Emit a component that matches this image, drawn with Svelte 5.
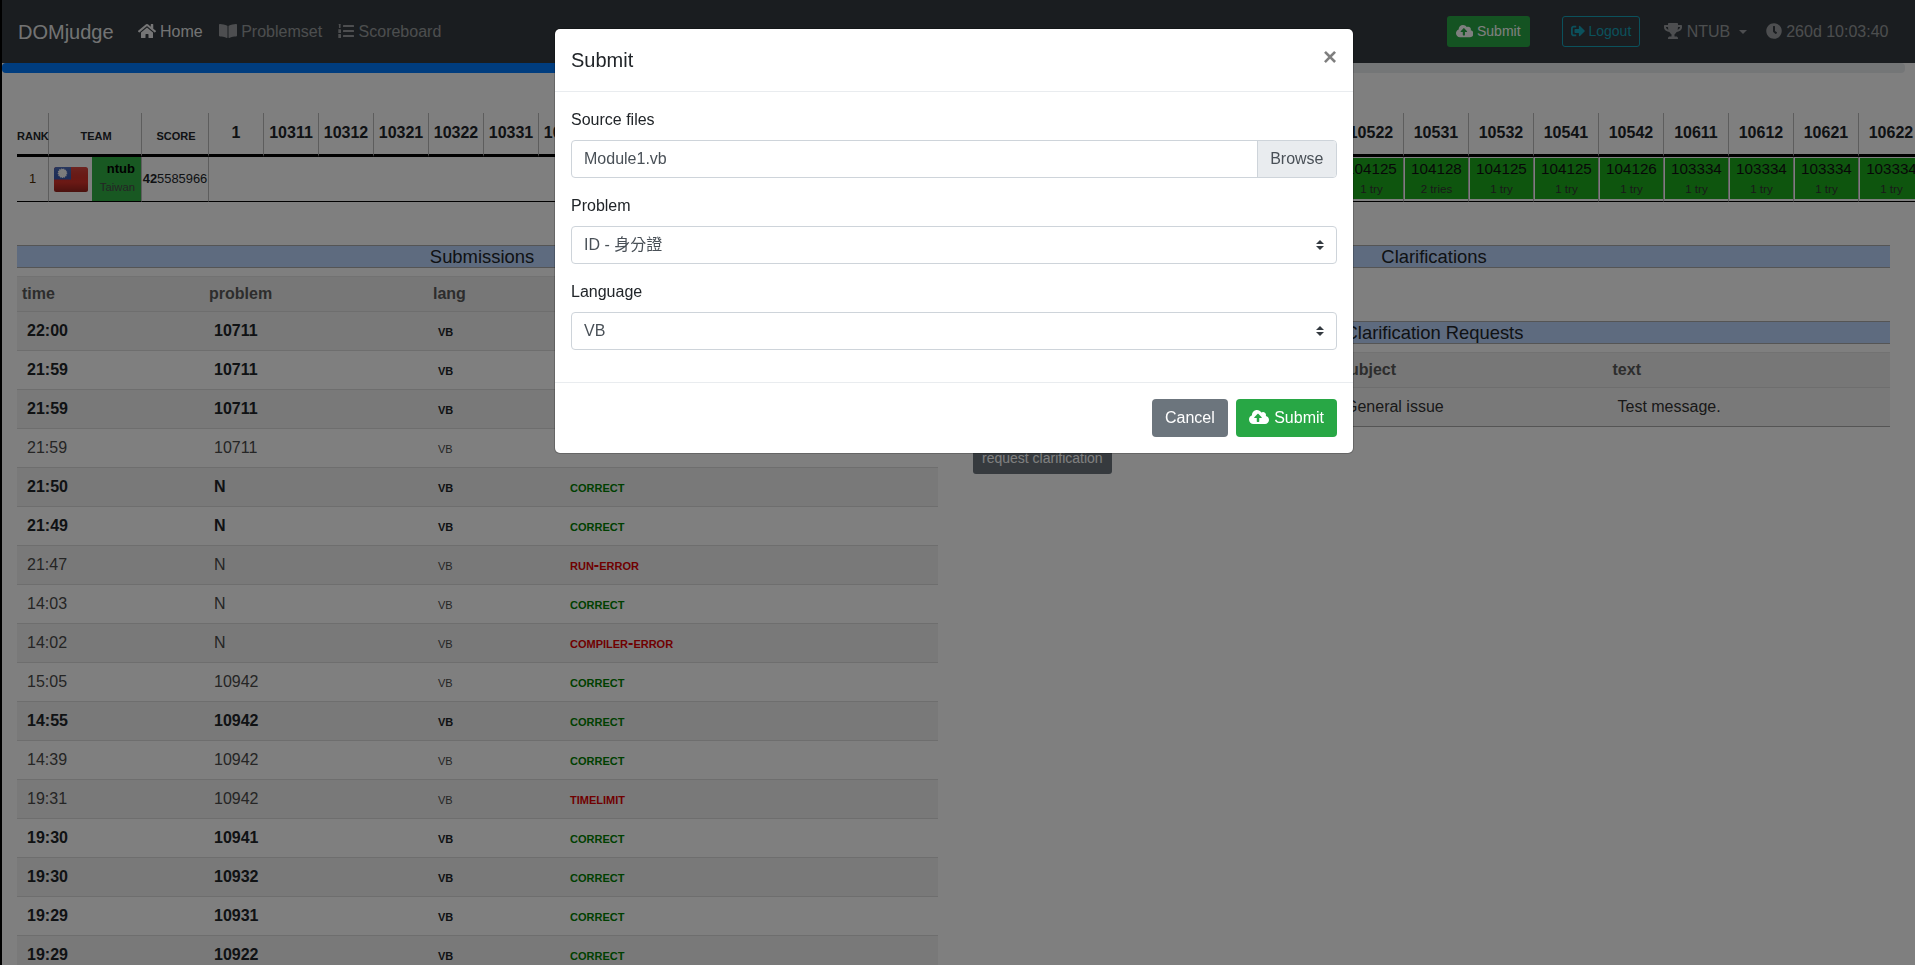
<script lang="ts">
	const home =
		'M280.37 148.26L96 300.11V464a16 16 0 0 0 16 16l112.06-.29a16 16 0 0 0 15.92-16V368a16 16 0 0 1 16-16h64a16 16 0 0 1 16 16v95.64a16 16 0 0 0 16 16.05L464 480a16 16 0 0 0 16-16V300L295.67 148.26a12.19 12.19 0 0 0-15.3 0zM571.6 251.47L488 182.56V44.05a12 12 0 0 0-12-12h-56a12 12 0 0 0-12 12v72.61L318.47 43a48 48 0 0 0-61 0L4.34 251.47a12 12 0 0 0-1.6 16.9l25.5 31A12 12 0 0 0 45.15 301l235.22-193.74a12.19 12.19 0 0 1 15.3 0L530.9 301a12 12 0 0 0 16.9-1.6l25.5-31a12 12 0 0 0-1.7-16.93z';
	const book =
		'M542.22 32.05c-54.8 3.11-163.72 14.43-230.96 55.59-4.64 2.84-7.27 7.89-7.27 13.17v363.87c0 11.55 12.63 18.85 23.28 13.49 69.18-34.82 169.23-44.32 218.7-46.92 16.89-.89 30.02-14.43 30.02-30.66V62.75c.01-17.71-15.35-31.74-33.77-30.7zM264.73 87.64C197.5 46.48 88.58 35.17 33.78 32.05 15.36 31.01 0 45.04 0 62.75V400.6c0 16.24 13.13 29.78 30.02 30.66 49.49 2.6 149.59 12.11 218.77 46.95 10.62 5.35 23.21-1.94 23.21-13.46V100.63c0-5.29-2.62-10.14-7.27-12.99z';
	const cloud =
		'M537.6 226.6c4.1-10.7 6.4-22.4 6.4-34.6 0-53-43-96-96-96-19.7 0-38.1 6-53.3 16.2C367 64.2 315.3 32 256 32c-88.4 0-160 71.6-160 160 0 2.7.1 5.4.2 8.1C40.2 219.8 0 273.2 0 336c0 79.5 64.5 144 144 144h368c70.7 0 128-57.3 128-128 0-61.9-44-113.6-102.4-125.4zM393.4 288H328v112c0 8.8-7.2 16-16 16h-48c-8.8 0-16-7.2-16-16V288h-65.4c-14.3 0-21.4-17.2-11.3-27.3l105.4-105.4c6.2-6.2 16.4-6.2 22.6 0l105.4 105.4c10.1 10.1 2.9 27.3-11.3 27.3z';
	const signOut =
		'M497 273L329 441c-15 15-41 4.5-41-17v-96H152c-13.3 0-24-10.7-24-24v-96c0-13.3 10.7-24 24-24h136V88c0-21.4 25.9-32 41-17l168 168c9.3 9.4 9.3 24.6 0 34zM192 436v-40c0-6.6-5.4-12-12-12H96c-17.7 0-32-14.3-32-32V160c0-17.7 14.3-32 32-32h84c6.6 0 12-5.4 12-12V76c0-6.6-5.4-12-12-12H96c-53 0-96 43-96 96v192c0 53 43 96 96 96h84c6.6 0 12-5.4 12-12z';
	const trophy =
		'M552 64H448V24c0-13.3-10.7-24-24-24H152c-13.3 0-24 10.7-24 24v40H24C10.7 64 0 74.7 0 88v56c0 35.7 22.5 72.4 61.9 100.7 31.5 22.7 69.8 37.1 110 41.7C203.3 338.5 240 360 240 360v72h-48c-35.3 0-64 20.7-64 56v12c0 6.6 5.4 12 12 12h296c6.6 0 12-5.4 12-12v-12c0-35.3-28.7-56-64-56h-48v-72s36.7-21.5 68.1-73.6c40.3-4.6 78.6-19 110-41.7 39.3-28.3 61.9-65 61.9-100.7V88c0-13.3-10.7-24-24-24zM99.3 192.8C74.9 175.2 64 155.6 64 144v-16h64.2c1 32.6 5.8 61.2 12.8 86.2-15.1-5.2-29.2-12.4-41.7-21.4zM512 144c0 16.1-17.7 36.1-35.3 48.8-12.5 9-26.7 16.2-41.8 21.4 7-25 11.8-53.6 12.8-86.2H512v16z';
	const clock =
		'M256,8C119,8,8,119,8,256S119,504,256,504,504,393,504,256,393,8,256,8Zm92.49,313h0l-20,25a16,16,0,0,1-22.49,2.5h0l-67-49.72a40,40,0,0,1-15-31.23V112a16,16,0,0,1,16-16h32a16,16,0,0,1,16,16V256l58,42.5A16,16,0,0,1,348.49,321Z';

	// scoreboard columns: the first ones are unsolved, the middle ones sit under the modal
	const problems = [
		{ id: '1', w: 55 },
		{ id: '10311', w: 55 },
		{ id: '10312', w: 55 },
		{ id: '10321', w: 55 },
		{ id: '10322', w: 55 },
		{ id: '10331', w: 55 },
		{ id: '10332', w: 55 },
		...['10341', '10342', '10411', '10412', '10421', '10422', '10431', '10432', '10441', '10442', '10511', '10521'].map(
			(id) => ({ id, w: 745 / 12, time: '104125', tries: '1 try' })
		),
		{ id: '10522', w: 65, time: '104125', tries: '1 try' },
		{ id: '10531', w: 65, time: '104128', tries: '2 tries' },
		{ id: '10532', w: 65, time: '104125', tries: '1 try' },
		{ id: '10541', w: 65, time: '104125', tries: '1 try' },
		{ id: '10542', w: 65, time: '104126', tries: '1 try' },
		{ id: '10611', w: 65, time: '103334', tries: '1 try' },
		{ id: '10612', w: 65, time: '103334', tries: '1 try' },
		{ id: '10621', w: 65, time: '103334', tries: '1 try' },
		{ id: '10622', w: 65, time: '103334', tries: '1 try' }
	];

	const submissions = [
		{ time: '22:00', problem: '10711', verdict: 'correct', unread: true },
		{ time: '21:59', problem: '10711', verdict: 'correct', unread: true },
		{ time: '21:59', problem: '10711', verdict: 'correct', unread: true },
		{ time: '21:59', problem: '10711', verdict: 'correct', unread: false },
		{ time: '21:50', problem: 'N', verdict: 'correct', unread: true },
		{ time: '21:49', problem: 'N', verdict: 'correct', unread: true },
		{ time: '21:47', problem: 'N', verdict: 'run-error', unread: false },
		{ time: '14:03', problem: 'N', verdict: 'correct', unread: false },
		{ time: '14:02', problem: 'N', verdict: 'compiler-error', unread: false },
		{ time: '15:05', problem: '10942', verdict: 'correct', unread: false },
		{ time: '14:55', problem: '10942', verdict: 'correct', unread: true },
		{ time: '14:39', problem: '10942', verdict: 'correct', unread: false },
		{ time: '19:31', problem: '10942', verdict: 'timelimit', unread: false },
		{ time: '19:30', problem: '10941', verdict: 'correct', unread: true },
		{ time: '19:30', problem: '10932', verdict: 'correct', unread: true },
		{ time: '19:29', problem: '10931', verdict: 'correct', unread: true },
		{ time: '19:29', problem: '10922', verdict: 'correct', unread: true }
	];
</script>

<div class="page">
	<div class="content">
		<nav class="navbar">
			<span class="brand">DOMjudge</span>
			<a class="nav-link active"><svg class="fa wide" viewBox="0 0 576 512"><path d={home} /></svg> Home</a>
			<a class="nav-link"><svg class="fa wide" viewBox="0 0 576 512"><path d={book} /></svg> Problemset</a>
			<a class="nav-link"
				><svg class="fa" viewBox="0 0 512 512">
					<rect x="160" y="64" width="352" height="64" rx="16" />
					<rect x="160" y="224" width="352" height="64" rx="16" />
					<rect x="160" y="384" width="352" height="64" rx="16" />
					<rect x="30" y="32" width="52" height="130" rx="8" />
					<rect x="10" y="200" width="86" height="116" rx="8" />
					<rect x="10" y="352" width="86" height="128" rx="8" />
				</svg> Scoreboard</a
			>
			<div class="nav-right">
				<span class="btn-sm success"><svg class="fa cloud" viewBox="0 0 640 512"><path d={cloud} /></svg> Submit</span>
				<span class="btn-sm outline"><svg class="fa small" viewBox="0 0 512 512"><path d={signOut} /></svg> Logout</span>
				<span class="team-menu"><svg class="fa wide" viewBox="0 0 576 512"><path d={trophy} /></svg> NTUB <i class="caret"></i></span>
				<span class="contest-time"><svg class="fa" viewBox="0 0 512 512"><path d={clock} /></svg> 260d 10:03:40</span>
			</div>
		</nav>

		<div class="progress"><div class="progress-bar"></div></div>

		<main class="main">
			<table class="scoreboard">
				<colgroup>
					<col class="col-rank" />
					<col class="col-team" />
					<col class="col-score" />
					{#each problems as p}
						<col style="width: {p.w}px" />
					{/each}
				</colgroup>
				<thead>
					<tr>
						<th class="caps">rank</th>
						<th class="caps shifted">team</th>
						<th class="caps shifted">score</th>
						{#each problems as p}
							<th class="prob">{p.id}</th>
						{/each}
					</tr>
				</thead>
				<tbody>
					<tr>
						<td class="rank">1</td>
						<td class="team">
							<div class="team-inner">
								<svg class="flag" viewBox="0 0 34 25">
									<defs>
										<linearGradient id="gloss" x1="0" y1="0" x2="0" y2="1">
											<stop offset="0" stop-color="#fff" stop-opacity="0.12" />
											<stop offset="0.6" stop-color="#000" stop-opacity="0" />
											<stop offset="1" stop-color="#000" stop-opacity="0.3" />
										</linearGradient>
									</defs>
									<rect width="34" height="25" rx="2.5" fill="#d8322a" />
									<path d="M2.5 0H17V12.5H0V2.5A2.5 2.5 0 0 1 2.5 0Z" fill="#3a5cb4" />
									<circle cx="8.5" cy="6.2" r="4.2" fill="#fff" stroke="#fff" stroke-dasharray="1 1" stroke-width="1.2" />
									<rect width="34" height="25" rx="2.5" fill="url(#gloss)" />
								</svg>
								<div class="team-name">
									<strong>ntub</strong>
									<span>Taiwan</span>
								</div>
							</div>
						</td>
						<td class="score"><b>42</b>5585966</td>
						{#each problems as p, i}
							<td class="result" class:open={!p.time && i > 0}>
								{#if p.time}
									<div class="solved">
										<span class="solve-time">{p.time}</span>
										<span class="tries">{p.tries}</span>
									</div>
								{/if}
							</td>
						{/each}
					</tr>
				</tbody>
			</table>

			<div class="columns">
				<section class="left">
					<h3 class="band">Submissions</h3>
					<table class="list submissions">
						<colgroup>
							<col class="c-time" />
							<col class="c-problem" />
							<col class="c-lang" />
							<col />
						</colgroup>
						<thead>
							<tr>
								<th>time</th>
								<th>problem</th>
								<th>lang</th>
								<th>verdict</th>
							</tr>
						</thead>
						<tbody>
							{#each submissions as s}
								<tr class:unread={s.unread}>
									<td>{s.time}</td>
									<td>{s.problem}</td>
									<td class="lang">vb</td>
									<td class="verdict" class:ok={s.verdict === 'correct'}>{s.verdict}</td>
								</tr>
							{/each}
						</tbody>
					</table>
				</section>

				<section class="right">
					<h3 class="band">Clarifications</h3>
					<h3 class="band second">Clarification Requests</h3>
					<table class="list requests">
						<colgroup>
							<col class="c-req-time" />
							<col class="c-req-time" />
							<col class="c-req-to" />
							<col class="c-subject" />
							<col />
						</colgroup>
						<thead>
							<tr>
								<th>time</th>
								<th>from</th>
								<th>to</th>
								<th>subject</th>
								<th>text</th>
							</tr>
						</thead>
						<tbody>
							<tr>
								<td>21:03</td>
								<td>ntub</td>
								<td>Jury</td>
								<td>General issue</td>
								<td>Test message.</td>
							</tr>
						</tbody>
					</table>
					<span class="btn-sm secondary request">request clarification</span>
				</section>
			</div>
		</main>
	</div>

	<div class="backdrop"></div>

	<div class="modal">
		<header class="modal-header">
			<h5>Submit</h5>
			<span class="close">×</span>
		</header>
		<div class="modal-body">
			<div class="group">
				<label>Source files</label>
				<div class="control file">
					<span class="file-name">Module1.vb</span>
					<span class="browse">Browse</span>
				</div>
			</div>
			<div class="group">
				<label>Problem</label>
				<div class="control select">
					<span>ID - 身分證</span>
					<svg class="arrows" viewBox="0 0 4 5"><path d="M2 0L0 2h4zm0 5L0 3h4z" /></svg>
				</div>
			</div>
			<div class="group">
				<label>Language</label>
				<div class="control select">
					<span>VB</span>
					<svg class="arrows" viewBox="0 0 4 5"><path d="M2 0L0 2h4zm0 5L0 3h4z" /></svg>
				</div>
			</div>
		</div>
		<footer class="modal-footer">
			<span class="btn secondary">Cancel</span>
			<span class="btn success"><svg class="fa cloud-lg" viewBox="0 0 640 512"><path d={cloud} /></svg> Submit</span>
		</footer>
	</div>
</div>

<style>
	:global(body) {
		margin: 0;
		background: #000;
	}

	.page {
		height: 965px;
		width: 1915px;
		overflow: hidden;
		padding-left: 2px;
		box-sizing: border-box;
		font-family: 'Liberation Sans', Arial, 'Noto Sans CJK TC', sans-serif;
		font-size: 16px;
		line-height: 1.5;
		color: #212529;
	}

	.content {
		background: #fff;
		height: 100%;
	}

	.fa {
		width: 16px;
		height: 16px;
		fill: currentColor;
		vertical-align: -2px;
	}

	.fa.wide {
		width: 18px;
	}

	.fa.small {
		width: 14px;
		height: 14px;
	}

	.fa.cloud {
		width: 17.5px;
		height: 14px;
	}

	.fa.cloud-lg {
		width: 20px;
		margin-right: 1px;
	}

	/* navbar */
	.navbar {
		display: flex;
		align-items: center;
		height: 63px;
		padding: 0 26.5px 0 16px;
		background: #343a40;
		box-sizing: border-box;
	}

	.brand {
		font-size: 20px;
		color: rgba(255, 255, 255, 0.9);
		margin-right: 16px;
	}

	.nav-link {
		padding: 0 8px;
		color: rgba(255, 255, 255, 0.5);
		white-space: nowrap;
	}

	.nav-link.active {
		color: rgba(255, 255, 255, 0.9);
	}

	.nav-right {
		margin-left: auto;
		display: flex;
		align-items: center;
		color: rgba(255, 255, 255, 0.5);
	}

	.btn-sm {
		display: inline-block;
		padding: 4px 8px;
		font-size: 14px;
		line-height: 21px;
		border: 1px solid transparent;
		border-radius: 3px;
		white-space: nowrap;
	}

	.btn-sm.success {
		background: #28a745;
		color: #fff;
		margin-right: 32px;
	}

	.btn-sm.outline {
		border-color: #17a2b8;
		color: #17a2b8;
		margin-right: 24px;
	}

	.btn-sm.secondary {
		background: #6c757d;
		color: #fff;
	}

	.team-menu {
		margin-right: 19px;
		white-space: nowrap;
	}

	.caret {
		display: inline-block;
		margin-left: 4px;
		vertical-align: 3px;
		border-top: 4.8px solid;
		border-left: 4.8px solid transparent;
		border-right: 4.8px solid transparent;
	}

	.contest-time {
		white-space: nowrap;
	}

	.progress {
		height: 10px;
		width: 1903px;
		background: #e9ecef;
		border-radius: 4px;
		overflow: hidden;
	}

	.progress-bar {
		height: 100%;
		width: 50%;
		background: #007bff;
	}

	/* scoreboard */
	.main {
		padding: 40px 0 0 15px;
	}

	.scoreboard {
		table-layout: fixed;
		width: 1906px;
		border-collapse: separate;
		border-spacing: 0;
	}

	.col-rank {
		width: 31px;
	}

	.col-team {
		width: 93px;
	}

	.col-score {
		width: 67px;
	}

	.scoreboard th {
		height: 41px;
		padding: 0;
		text-align: center;
		border-left: 1px solid #bbb;
		border-bottom: 3px solid #000;
		box-sizing: content-box;
	}

	.scoreboard th:first-child {
		border-left: 0;
	}

	.scoreboard th.caps {
		font-size: 15.5px;
		font-weight: bold;
		font-variant: small-caps;
		padding-top: 2px;
		height: 39px;
	}

	.scoreboard th.caps.shifted {
		padding-left: 2px;
	}

	.scoreboard th.prob {
		font-size: 16px;
		padding-bottom: 2px;
		height: 39px;
	}

	.scoreboard td {
		height: 44px;
		padding: 0;
		border-left: 1px solid #bbb;
		border-bottom: 1px solid #000;
		vertical-align: middle;
	}

	.scoreboard td:first-child {
		border-left: 0;
	}

	.rank {
		text-align: center;
		font-size: 13px;
		color: #4d2a00;
	}

	.team-inner {
		display: flex;
		height: 44px;
		align-items: center;
	}

	.flag {
		width: 34px;
		height: 25px;
		margin: 0 4px 0 5px;
		flex: none;
	}

	.team-name {
		flex: 1;
		height: 100%;
		background: #30b045;
		text-align: right;
		padding: 3px 6px 0 0;
		box-sizing: border-box;
		display: flex;
		flex-direction: column;
		line-height: 18px;
	}

	.team-name strong {
		font-size: 13px;
		color: #000;
	}

	.team-name span {
		font-size: 11.3px;
		color: #4a4a4a;
	}

	.score {
		font-size: 12.9px;
		text-align: center;
		white-space: nowrap;
		overflow: hidden;
	}

	.scoreboard td.result {
		padding: 1px 0 2px 1px;
		height: 41px;
	}

	.scoreboard td.result.open {
		border-left: 0;
	}

	.solved {
		height: 41px;
		background: #1daa1d;
		text-align: center;
		overflow: hidden;
		display: flex;
		flex-direction: column;
		align-items: center;
		white-space: nowrap;
	}

	.solve-time {
		font-size: 15.2px;
		line-height: 22px;
		color: #111;
	}

	.tries {
		font-size: 11.6px;
		line-height: 18px;
		color: #333;
	}

	/* lists */
	.columns {
		display: flex;
		gap: 26px;
		margin-top: 43px;
	}

	.left {
		width: 930px;
		flex: none;
	}

	.right {
		width: 917px;
		flex: none;
	}

	.band {
		margin: 0;
		font-size: 18.4px;
		font-weight: normal;
		line-height: 21px;
		text-align: center;
		background: #bcd6ff;
		border-top: 1px solid #aaa;
		border-bottom: 1px solid #aaa;
	}

	.right .band,
	.right .list {
		margin-left: 5px;
	}

	.right .band {
		width: 912px;
	}

	.band.second {
		margin-top: 53px;
	}

	.list {
		table-layout: fixed;
		border-collapse: separate;
		border-spacing: 0;
		margin-top: 8px;
	}

	.submissions {
		width: 921px;
	}

	.requests {
		width: 912px;
	}

	.c-time {
		width: 187px;
	}

	.c-problem {
		width: 224px;
	}

	.c-lang {
		width: 132px;
	}

	.c-req-time {
		width: 120px;
	}

	.c-req-to {
		width: 117px;
	}

	.c-subject {
		width: 272.5px;
	}

	.list th {
		padding: 0 0 0 5px;
		text-align: left;
		font-weight: bold;
		color: #5a5a5a;
		background: #eee;
		border-top: 1px solid #e4e4e4;
		box-sizing: border-box;
		height: 35px;
	}

	.list td {
		height: 39px;
		padding: 0 0 0 10px;
		box-sizing: border-box;
		border-top: 1px solid #ddd;
		color: #4a4a4a;
	}

	.list tbody tr:nth-child(odd) td {
		background: #f2f2f2;
	}

	.list tr.unread td {
		font-weight: bold;
		color: #212529;
	}

	.requests tbody tr:last-child td {
		border-bottom: 1px solid #aaa;
		height: 40px;
		color: #333;
	}

	.list td.lang,
	.list td.verdict {
		font-variant: small-caps;
	}

	.list td.verdict,
	.list tr.unread td.verdict {
		font-weight: bold;
		color: #e00000;
	}

	.list td.verdict.ok,
	.list tr.unread td.verdict.ok {
		color: #008000;
	}

	.request {
		margin-top: 16px;
	}

	/* modal */
	.backdrop {
		position: fixed;
		inset: 0;
		background: rgba(0, 0, 0, 0.5);
	}

	.modal {
		position: fixed;
		top: 29px;
		left: 555px;
		width: 798px;
		background: #fff;
		border-radius: 5px;
		box-shadow: 0 0 0 1px rgba(0, 0, 0, 0.2);
	}

	.modal-header {
		display: flex;
		justify-content: space-between;
		padding: 16px;
		border-bottom: 1px solid #e9ecef;
	}

	.modal-header h5 {
		margin: 0;
		font-size: 20px;
		font-weight: normal;
		line-height: 30px;
	}

	.close {
		font-size: 24px;
		font-weight: bold;
		line-height: 24px;
		color: #000;
		opacity: 0.5;
	}

	.modal-body {
		padding: 16px;
	}

	.group {
		margin-bottom: 16px;
	}

	.group label {
		display: block;
		margin-bottom: 8px;
	}

	.control {
		display: flex;
		align-items: center;
		justify-content: space-between;
		height: 38px;
		box-sizing: border-box;
		border: 1px solid #ced4da;
		border-radius: 4px;
		color: #495057;
		overflow: hidden;
	}

	.file-name {
		padding-left: 12px;
	}

	.browse {
		padding: 0 12.5px;
		align-self: stretch;
		display: flex;
		align-items: center;
		background: #e9ecef;
		border-left: 1px solid #ced4da;
	}

	.select {
		padding: 0 12px;
	}

	.arrows {
		width: 8px;
		height: 10px;
		fill: #343a40;
	}

	.modal-footer {
		display: flex;
		justify-content: flex-end;
		gap: 8px;
		padding: 16px;
		border-top: 1px solid #e9ecef;
	}

	.btn {
		display: inline-block;
		padding: 6px 12px;
		line-height: 24px;
		border: 1px solid transparent;
		border-radius: 4px;
		color: #fff;
		white-space: nowrap;
	}

	.btn.secondary {
		background: #6c757d;
	}

	.btn.success {
		background: #28a745;
	}
</style>
